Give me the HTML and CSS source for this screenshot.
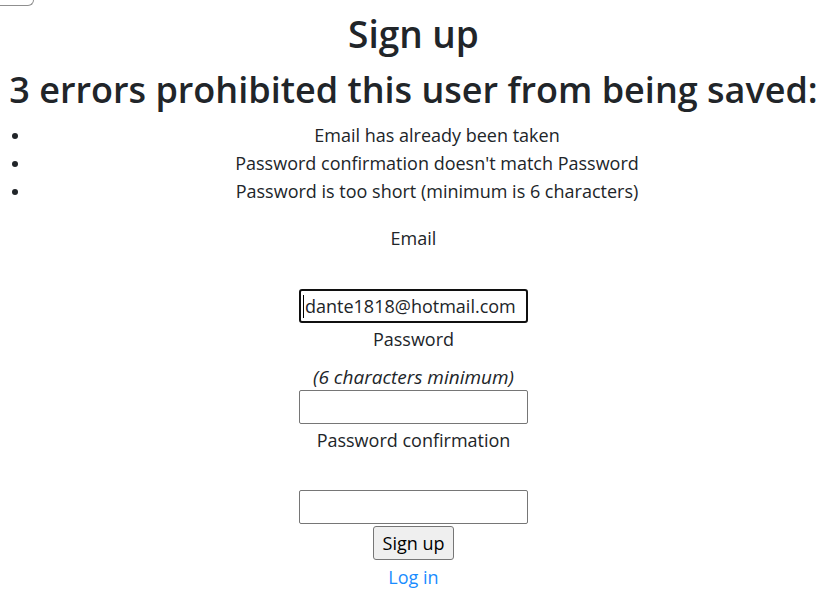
FILE: index.html
```html
<!DOCTYPE html>
<html lang="en">
<head>
<meta charset="utf-8">
<title>Sign up</title>
<link rel="stylesheet" href="styles.css">
</head>
<body>
<div class="page">
  <div class="top-tab"></div>
  <h1 class="title">Sign up</h1>
  <form class="signup" action="#" method="post">
    <div class="errors">
      <h2 class="errors-title">3 errors prohibited this user from being saved:</h2>
      <ul class="errors-list">
        <li>Email has already been taken</li>
        <li>Password confirmation doesn't match Password</li>
        <li>Password is too short (minimum is 6 characters)</li>
      </ul>
    </div>

    <div class="field field-email">
      <label for="user_email">Email</label>
      <span class="input-wrap">
        <input class="input input-focus" type="email" id="user_email" value="dante1818@hotmail.com">
        <span class="caret"></span>
      </span>
    </div>

    <div class="field field-password">
      <label for="user_password">Password</label>
      <em class="hint">(6 characters minimum)</em>
      <input class="input" type="password" id="user_password">
    </div>

    <div class="field field-confirm">
      <label for="user_password_confirmation">Password confirmation</label>
      <input class="input" type="password" id="user_password_confirmation">
    </div>

    <div class="actions">
      <button class="btn" type="button">Sign up</button>
    </div>
  </form>
  <a class="link" href="#">Log in</a>
</div>
</body>
</html>
```

FILE: styles.css
```css
html, body {
  margin: 0;
  padding: 0;
  background: #fff;
}

body {
  font-family: "Open Sans", "Noto Sans", sans-serif;
  font-size: 18px;
  line-height: 24px;
  color: #212529;
  overflow: hidden;
}

.page {
  width: 827px;
  display: flex;
  flex-direction: column;
  align-items: center;
  text-align: center;
}

.top-tab {
  align-self: flex-start;
  width: 33px;
  height: 5px;
  border: 1px solid #8f8f8f;
  border-top: none;
  border-left: none;
  border-radius: 0 0 7px 0;
}

.title {
  margin: 4px 0 0;
  font-size: 37px;
  line-height: 48px;
  font-weight: 600;
}

.signup {
  width: 100%;
  display: flex;
  flex-direction: column;
  align-items: center;
}

.errors {
  width: 100%;
}

.errors-title {
  margin: 12px 0 0;
  font-size: 36px;
  line-height: 40px;
  font-weight: 600;
  white-space: nowrap;
}

.errors-list {
  margin: 11px 0 0;
  padding: 0 0 0 31px;
  list-style: disc;
}

.errors-list li {
  padding-left: 16px;
  line-height: 28px;
}

.field {
  display: flex;
  flex-direction: column;
  align-items: center;
}

.field label {
  display: block;
  line-height: 24px;
}

.field-email {
  margin-top: 21px;
}

.field-email label {
  margin-bottom: 39px;
}

.field-password {
  margin-top: 4px;
}

.hint {
  margin-top: 14px;
  line-height: 24px;
  font-style: italic;
  font-size: 19px;
}

.field-password .input {
  margin-top: 1px;
}

.field-confirm {
  margin-top: 4px;
}

.field-confirm label {
  margin-bottom: 38px;
}

.input-wrap {
  position: relative;
  display: block;
}

.input {
  box-sizing: border-box;
  width: 229px;
  height: 34px;
  margin: 0;
  padding: 1px 4px 1px 5px;
  border: 1px solid #767676;
  border-radius: 2px;
  font-family: inherit;
  font-size: 18px;
  color: #212529;
  background: #fff;
}

.input-focus {
  border: 2px solid #101010;
  border-radius: 3px;
  padding-left: 4px;
  outline: none;
}

.caret {
  position: absolute;
  left: 4px;
  top: 6px;
  width: 1px;
  height: 23px;
  background: #000;
}

.actions {
  margin-top: 2px;
}

.btn {
  box-sizing: border-box;
  height: 34px;
  padding: 0 9px;
  border: 1px solid #767676;
  border-radius: 3px;
  background: #efefef;
  font-family: inherit;
  font-size: 18px;
  color: #000;
}

.link {
  margin-top: 5px;
  color: #1a8cff;
  text-decoration: none;
  font-size: 18px;
  line-height: 24px;
}
```
